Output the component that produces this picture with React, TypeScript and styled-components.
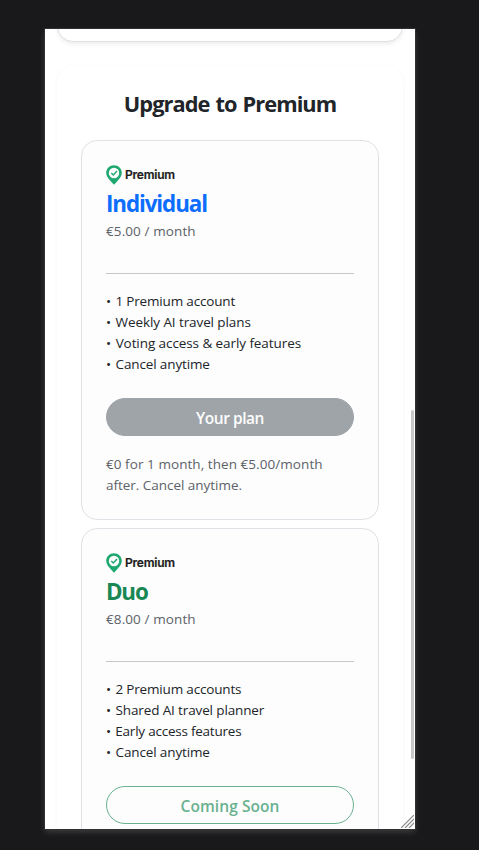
import React from "react";
import styled, { createGlobalStyle } from "styled-components";

const GlobalStyle = createGlobalStyle`
  * { box-sizing: border-box; }
  body { margin: 0; background: #19191b; font-family: "Open Sans", "Noto Sans", sans-serif; color: #212529; }
`;

const Stage = styled.main`
  height: 850px;
  padding: 29px 64px 21px 45px;
  overflow: hidden;
`;

const Device = styled.div`
  position: relative;
  width: 370px;
  height: 800px;
  background: #fff;
  box-shadow: 0 0 0 1px #303032, 0 3px 6px rgba(255, 255, 255, 0.16);
`;

const Viewport = styled.div`
  height: 800px;
  padding: 0 12px;
  overflow: hidden;
`;

const PreviousCard = styled.div`
  height: 41px;
  margin-top: -28px;
  border: 1px solid #dee2e6;
  border-radius: 16px;
  background: #fff;
  box-shadow: 0 2px 4px rgba(0, 0, 0, 0.075);
`;

const Panel = styled.section`
  margin-top: 24px;
  height: 840px;
  padding: 23px 24px;
  border-radius: 16px;
  background: #fff;
  box-shadow: 0 1px 4px rgba(0, 0, 0, 0.045);
`;

const Heading = styled.h1`
  margin: 0 0 22px;
  text-align: center;
  font-size: 21.8px;
  line-height: 29px;
  font-weight: 700;
  letter-spacing: -0.93px;
  word-spacing: 1.2px;
  white-space: nowrap;
`;

const PlanCard = styled.article`
  height: 380px;
  margin-bottom: 8px;
  padding: 24px;
  border: 1px solid #dee2e6;
  border-radius: 16px;
  background: #fdfdfd;
`;

const Brand = styled.div`
  display: flex;
  align-items: center;
  gap: 3px;
  height: 20px;
  font: 600 12px/20px Inter, sans-serif;
  letter-spacing: -0.22px;
  color: #1b1b1b;
  -webkit-text-stroke: 0.2px #1b1b1b;
`;

const PlanName = styled.h2<{ $color: string; $spacing: number }>`
  margin: 5px 0 3px;
  font-size: 22.4px;
  line-height: 28px;
  font-weight: 700;
  letter-spacing: ${(p) => p.$spacing}px;
  color: ${(p) => p.$color};
`;

const Price = styled.div`
  height: 21px;
  font-size: 13.5px;
  line-height: 21px;
  letter-spacing: 0.1px;
  color: #5c6268;
`;

const Divider = styled.div`
  height: 1px;
  margin: 31px 0 17px;
  background: #c6c7c8;
`;

const Features = styled.ul`
  list-style: none;
  margin: 0;
  padding: 0;
`;

const Feature = styled.li<{ $spacing: number }>`
  height: 21px;
  font-size: 13.5px;
  line-height: 21px;
  letter-spacing: ${(p) => p.$spacing}px;
  white-space: nowrap;
`;

const Bullet = styled.span`
  margin-right: 1.2px;
`;

const PlanButton = styled.button<{ $outlined?: boolean; $spacing: number }>`
  display: block;
  width: 100%;
  height: 38px;
  margin: 23px 0 18px;
  padding: 2px 0 0;
  border: 1px solid ${(p) => (p.$outlined ? "#69b18f" : "#9fa4a9")};
  border-radius: 19px;
  background: ${(p) => (p.$outlined ? "transparent" : "#9fa4a9")};
  color: ${(p) => (p.$outlined ? "#69b18f" : "#fdfdfd")};
  font: 600 15.5px/24px "Open Sans", sans-serif;
  letter-spacing: ${(p) => p.$spacing}px;
`;

const Terms = styled.p<{ $spacing: number }>`
  margin: 0;
  font-size: 13.5px;
  line-height: 21px;
  letter-spacing: ${(p) => p.$spacing}px;
  color: #5c6268;
`;

const ScrollThumb = styled.div`
  position: absolute;
  top: 381px;
  right: 1px;
  width: 3px;
  height: 349px;
  border-radius: 2px;
  background: #c8c8c8;
`;

const ResizeGrip = styled.svg`
  position: absolute;
  right: 1px;
  bottom: 1px;
`;

const PinLogo = () => (
  <svg width="16" height="20" viewBox="0 0 16 20">
    <path d="M8 .2C3.6.2.2 3.6.2 7.8c0 3.5 2.3 6.1 5 8.9L8 19.8l2.8-3.1c2.7-2.8 5-5.4 5-8.9C15.8 3.6 12.4.2 8 .2Z" fill="#1fa870" />
    <circle cx="8" cy="8" r="5.2" fill="#fdfdfd" />
    <path d="m5.3 7.9 2 2 3.7-3.9" fill="none" stroke="#1fa870" strokeWidth="1.4" />
  </svg>
);

interface Line {
  text: string;
  spacing: number;
}

interface Plan {
  name: string;
  color: string;
  nameSpacing: number;
  price: string;
  features: Line[];
  action: Line;
  outlined?: boolean;
  terms?: Line[];
}

const plans: Plan[] = [
  {
    name: "Individual",
    color: "#0d6efd",
    nameSpacing: -1.1,
    price: "€5.00 / month",
    features: [
      { text: "1 Premium account", spacing: -0.17 },
      { text: "Weekly AI travel plans", spacing: -0.09 },
      { text: "Voting access & early features", spacing: -0.08 },
      { text: "Cancel anytime", spacing: -0.13 },
    ],
    action: { text: "Your plan", spacing: -0.45 },
    terms: [
      { text: "€0 for 1 month, then €5.00/month", spacing: 0.06 },
      { text: "after. Cancel anytime.", spacing: -0.03 },
    ],
  },
  {
    name: "Duo",
    color: "#198754",
    nameSpacing: -1.2,
    price: "€8.00 / month",
    features: [
      { text: "2 Premium accounts", spacing: -0.17 },
      { text: "Shared AI travel planner", spacing: -0.13 },
      { text: "Early access features", spacing: -0.23 },
      { text: "Cancel anytime", spacing: -0.13 },
    ],
    action: { text: "Coming Soon", spacing: 0.08 },
    outlined: true,
  },
];

export default function App() {
  return (
    <Stage>
      <GlobalStyle />
      <Device>
        <Viewport>
          <PreviousCard />
          <Panel>
            <Heading>Upgrade to Premium</Heading>
            {plans.map((plan) => (
              <PlanCard key={plan.name}>
                <Brand><PinLogo />Premium</Brand>
                <PlanName $color={plan.color} $spacing={plan.nameSpacing}>{plan.name}</PlanName>
                <Price>{plan.price}</Price>
                <Divider />
                <Features>
                  {plan.features.map((f) => (
                    <Feature key={f.text} $spacing={f.spacing}><Bullet>•</Bullet> {f.text}</Feature>
                  ))}
                </Features>
                <PlanButton $outlined={plan.outlined} $spacing={plan.action.spacing}>{plan.action.text}</PlanButton>
                {plan.terms?.map((line) => (
                  <Terms key={line.text} $spacing={line.spacing}>{line.text}</Terms>
                ))}
              </PlanCard>
            ))}
          </Panel>
        </Viewport>
        <ScrollThumb />
        <ResizeGrip width="13" height="13" viewBox="0 0 13 13" fill="none" stroke="#888" strokeWidth="1.2">
          <path d="M0 13 13 0M4 13l9-9M8 13l5-5" />
        </ResizeGrip>
      </Device>
    </Stage>
  );
}
